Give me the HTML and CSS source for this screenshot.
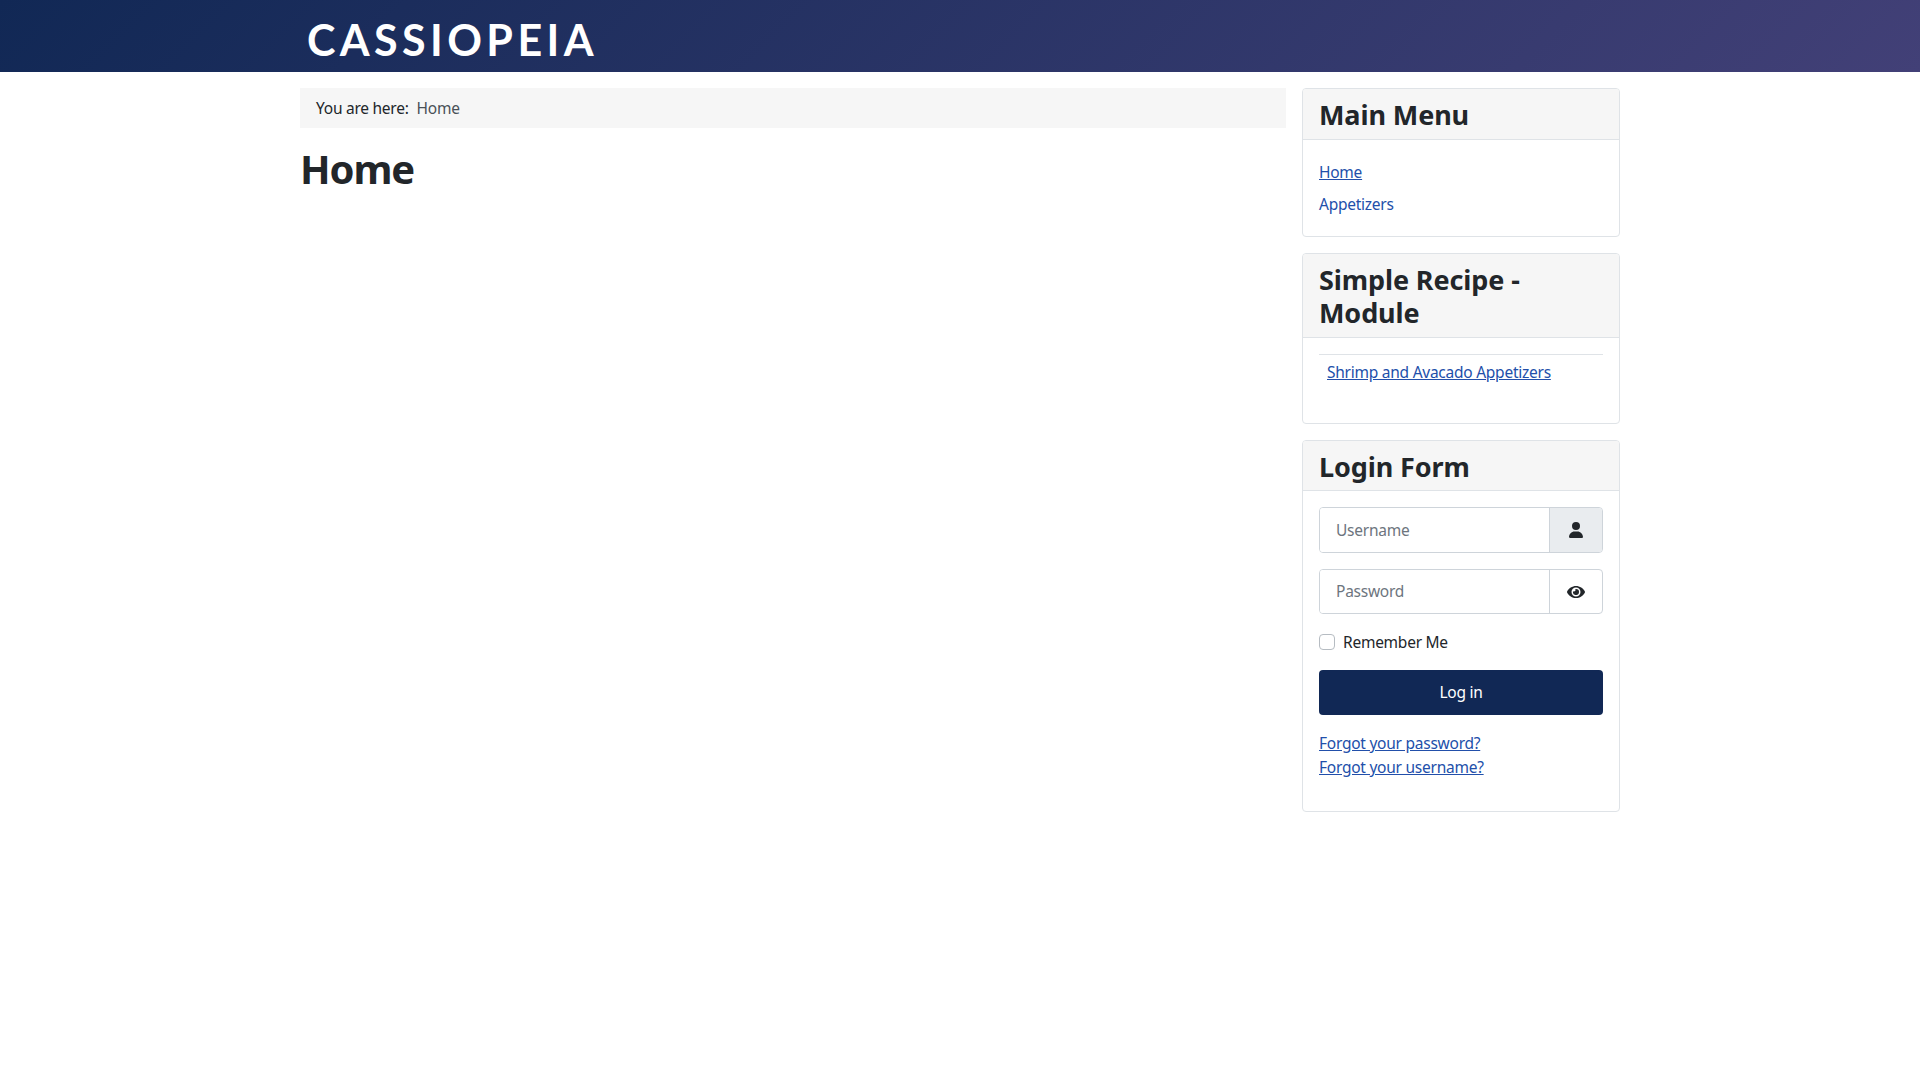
FILE: index.html
```html
<!DOCTYPE html>
<html lang="en">
<head>
  <meta charset="UTF-8" />
  <title>Home</title>
  <link rel="stylesheet" href="styles.css">
</head>
<body>

  <!-- header -->
  <header class="site-header">
    <div class="header-inner">
      <a class="brand" href="#">CASSIOPEIA</a>
    </div>
  </header>

  <div class="site-grid">
    <main class="main-col">
      <nav class="breadcrumb">
        <span class="crumb-label">You are here:</span>
        <span class="crumb-item">Home</span>
      </nav>
      <h1 class="page-title">Home</h1>
    </main>

    <aside class="sidebar">
      <div class="card">
        <h3 class="card-header">Main Menu</h3>
        <ul class="card-body menu">
          <li><a class="link" href="#">Home</a></li>
          <li><a class="link plain" href="#">Appetizers</a></li>
        </ul>
      </div>

      <div class="card">
        <h3 class="card-header">Simple Recipe - Module</h3>
        <div class="card-body recipe">
          <hr class="divider">
          <a class="link recipe-link" href="#">Shrimp and Avacado Appetizers</a>
        </div>
      </div>

      <div class="card">
        <h3 class="card-header compact">Login Form</h3>
        <form class="card-body login">
          <div class="input-group">
            <input class="input" type="text" placeholder="Username">
            <span class="addon filled">
              <svg class="icon" viewBox="0 0 448 512"><path fill="#22262a" d="M224 256a128 128 0 1 0 0-256 128 128 0 0 0 0 256zm-45.700 48C79.800 304 0 383.800 0 482.300 0 498.700 13.300 512 29.700 512h388.600c16.400 0 29.700-13.300 29.700-29.700C448 383.800 368.200 304 269.700 304h-91.400z"/></svg>
            </span>
          </div>
          <div class="input-group short">
            <input class="input" type="password" placeholder="Password">
            <span class="addon">
              <svg class="icon eye" viewBox="0 0 576 512"><path fill="#22262a" d="M572.500 241.400C518.300 135.600 410.900 64 288 64S57.700 135.600 3.500 241.400a32.400 32.400 0 0 0 0 29.200C57.700 376.400 165.100 448 288 448s230.300-71.600 284.500-177.400a32.400 32.400 0 0 0 0-29.200zM288 400a144 144 0 1 1 144-144 143.900 143.900 0 0 1-144 144zm0-240a95.300 95.300 0 0 0-25.300 3.800 47.900 47.900 0 0 1-66.900 66.900A95.800 95.800 0 1 0 288 160z"/></svg>
            </span>
          </div>
          <label class="remember">
            <input class="checkbox" type="checkbox">
            <span>Remember Me</span>
          </label>
          <button class="btn" type="button">Log in</button>
          <div class="login-links">
            <a class="link" href="#">Forgot your password?</a>
            <a class="link" href="#">Forgot your username?</a>
          </div>
        </form>
      </div>
    </aside>
  </div>

</body>
</html>
```

FILE: styles.css
```css
* {
  box-sizing: border-box;
}

html, body {
  margin: 0;
  padding: 0;
  height: 100%;
  background: #fff;
  color: #22262a;
  font-family: "Noto Sans", "Open Sans", sans-serif;
  font-size: 15.5px;
  letter-spacing: -0.25px;
  line-height: 24px;
}

.site-header {
  height: 72px;
  background: linear-gradient(135deg, #112855 0%, #424077 100%);
}

.header-inner {
  width: 1320px;
  margin: 0 auto;
  padding-left: 7px;
  height: 100%;
  display: flex;
  align-items: center;
}

.brand {
  color: #fff;
  text-decoration: none;
  font-family: "Lato", "Liberation Sans", sans-serif;
  font-weight: 700;
  font-size: 43px;
  line-height: 72px;
  letter-spacing: 4.4px;
  padding-top: 8px;
}

.site-grid {
  width: 1320px;
  margin: 16px auto 0;
  display: flex;
  gap: 16px;
  align-items: flex-start;
}

.main-col {
  flex: 1;
  min-width: 0;
}

.breadcrumb {
  height: 40px;
  padding: 0 16px;
  display: flex;
  align-items: center;
  gap: 8px;
  background: #f6f6f6;
}

.crumb-item {
  color: #495057;
}

.page-title {
  margin: 17px 0 0;
  font-size: 40px;
  letter-spacing: -1.1px;
  line-height: 48px;
  font-weight: 700;
}

.sidebar {
  width: 318px;
  flex: none;
  display: flex;
  flex-direction: column;
  gap: 16px;
}

.card {
  border: 1px solid #dfe3e7;
  border-radius: 4px;
  overflow: hidden;
}

.card-header {
  margin: 0;
  padding: 9px 16px 8px;
  background: #f6f6f6;
  border-bottom: 1px solid #dfe3e7;
  font-size: 27px;
  letter-spacing: -0.1px;
  line-height: 33px;
  font-weight: 700;
}

.card-header.compact {
  padding-bottom: 7px;
}

.card-body {
  margin: 0;
  padding: 16px;
}

.menu {
  list-style: none;
  height: 96px;
  padding-top: 20px;
  display: flex;
  flex-direction: column;
  gap: 8px;
}

.link {
  color: #224faa;
  text-decoration: underline;
}

.link.plain {
  text-decoration: none;
}

.recipe {
  height: 85px;
}

.divider {
  margin: 0 0 5px;
  border: 0;
  border-top: 1px solid #dfe3e7;
}

.recipe-link {
  display: block;
  padding-left: 8px;
}

.login {
  height: 320px;
  display: flex;
  flex-direction: column;
}

.input-group {
  display: flex;
  height: 46px;
  border: 1px solid #ced4da;
  border-radius: 4px;
  overflow: hidden;
  margin-bottom: 16px;
}

.input-group.short {
  height: 45px;
}

.input {
  flex: 1;
  min-width: 0;
  border: 0;
  outline: 0;
  padding: 0 16px;
  font: inherit;
  letter-spacing: inherit;
  color: #22262a;
  background: #fff;
}

.input-group.short .input {
  padding-bottom: 1px;
}

.input::placeholder {
  color: #6d757e;
  opacity: 1;
}

.addon {
  width: 53px;
  flex: none;
  display: flex;
  align-items: center;
  justify-content: center;
  border-left: 1px solid #ced4da;
}

.addon.filled {
  background: #e9ecef;
}

.icon {
  width: 14px;
  height: 16px;
}

.icon.eye {
  width: 18px;
}

.remember {
  display: flex;
  align-items: center;
  gap: 8px;
  height: 24px;
}

.checkbox {
  appearance: none;
  width: 16px;
  height: 16px;
  margin: 0;
  background: #fff;
  border: 1px solid #b6bcc2;
  border-radius: 4px;
}

.btn {
  height: 45px;
  margin-top: 16px;
  padding: 0 0 2px;
  border: 0;
  border-radius: 4px;
  background: #112855;
  color: #fff;
  font: inherit;
  letter-spacing: inherit;
}

.login-links {
  margin-top: 16px;
  display: flex;
  flex-direction: column;
}
```
